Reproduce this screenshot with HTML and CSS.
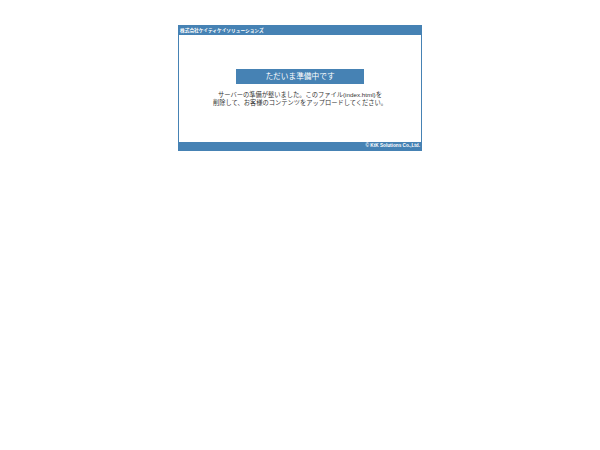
FILE: index.html
```html
<!DOCTYPE html>
<html lang="ja">
<head>
<meta charset="utf-8">
<title>ただいま準備中です</title>
<link rel="stylesheet" href="styles.css">
</head>
<body>
<div class="box">
  <div class="head">株式会社ケイティケイソリューションズ</div>
  <div class="main">
    <div class="btn">ただいま準備中です</div>
    <p class="msg">サーバーの準備が整いました。このファイル(index.html)を<br>削除して、お客様のコンテンツをアップロードしてください。</p>
  </div>
  <div class="foot">© KtK Solutions Co.,Ltd.</div>
</div>
</body>
</html>
```
FILE: styles.css
```css
html, body {
  margin: 0;
  padding: 0;
  background: #ffffff;
}
body {
  font-family: "Liberation Sans", "Noto Sans CJK JP", sans-serif;
  color: #333333;
}
.box {
  width: 242px;
  margin: 25px auto 0;
  border: 1px solid #4682b4;
  display: flex;
  flex-direction: column;
}
.head {
  height: 9px;
  background: #4682b4;
  color: #ffffff;
  font-size: 4.7px;
  font-weight: bold;
  line-height: 9px;
  padding-left: 1px;
  white-space: nowrap;
}
.main {
  height: 107px;
  box-sizing: border-box;
  padding-top: 34px;
  display: flex;
  flex-direction: column;
  align-items: center;
}
.btn {
  width: 128px;
  height: 15px;
  background: #4682b4;
  color: #ffffff;
  font-size: 7.7px;
  line-height: 15px;
  text-align: center;
}
.msg {
  margin: 6.5px 0 0;
  font-size: 6.25px;
  line-height: 8.7px;
  text-align: center;
  white-space: nowrap;
}
.foot {
  height: 8px;
  background: #4682b4;
  color: #ffffff;
  font-size: 4.7px;
  font-weight: bold;
  line-height: 8px;
  text-align: right;
  padding-right: 1px;
}
```
